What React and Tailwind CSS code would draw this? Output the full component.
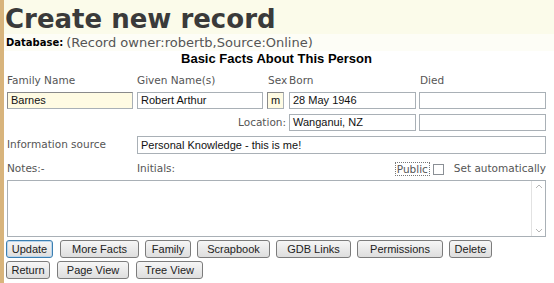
import React from 'react'

const sans = { fontFamily: '"DejaVu Sans", Verdana, sans-serif' }
const arial = { fontFamily: '"Liberation Sans", Arial, sans-serif' }

function Field({ value, className }) {
  return (
    <div
      className={"h-[17px] border border-[#a9b0b6] px-[3px] text-[11px] leading-[15px] text-[#111] whitespace-nowrap overflow-hidden " + className}
      style={arial}
    >
      {value}
    </div>
  )
}

function Btn({ label, w, focus }) {
  return (
    <button
      className={
        "h-[18px] rounded-[3px] border text-[11px] leading-[16px] text-[#222] bg-gradient-to-b from-[#f6f6f6] to-[#dedede] " +
        (focus ? "border-[#3c7fb1] shadow-[inset_0_0_0_1px_#bcd6ec]" : "border-[#7c7c7c]") +
        " " + w
      }
      style={arial}
    >
      {label}
    </button>
  )
}

export default function App() {
  return (
    <div className="w-[554px] h-[283px] flex bg-white overflow-hidden">
      <div className="w-[4px] shrink-0 bg-[#d8b47c]" />
      <div className="flex-1 flex flex-col">
        <div className="bg-[#fbfbea] pt-[4px] pl-[1px]">
          <h1 className="text-[26px] leading-[30px] font-bold text-[#3a3a3a]" style={sans}>
            Create new record
          </h1>
        </div>
        <div className="pl-[2px] h-[17px] flex items-center whitespace-nowrap bg-[#fdfdf6]" style={sans}>
          <span className="text-[10px] font-bold text-black">Database:</span>
          <span className="text-[13px] text-[#555] ml-[3px]">(Record owner:robertb,Source:Online)</span>
        </div>

        <div className="pl-[3px] w-[542px] flex flex-col">
          <div className="h-[16px] flex items-center justify-center text-[13px] font-bold text-black" style={arial}>
            Basic Facts About This Person
          </div>

          {/* labels */}
          <div className="mt-[7px] h-[14px] flex items-center text-[10.5px] text-[#555] whitespace-nowrap" style={sans}>
            <span className="w-[130px]">Family Name</span>
            <span className="w-[131px]">Given Name(s)</span>
            <span className="w-[21px]">Sex</span>
            <span className="w-[131px]">Born</span>
            <span>Died</span>
          </div>

          {/* names / born / died */}
          <div className="mt-[4px] flex">
            <Field value="Barnes" className="w-[126px] bg-[#fffbe3] border-t-[#8a8a8a] border-l-[#8a8a8a]" />
            <Field value="Robert Arthur" className="w-[126px] ml-[4px] bg-white" />
            <Field value="m" className="w-[17px] ml-[4px] px-[2px] bg-[#fffbe3] border-t-[#8a8a8a] border-l-[#8a8a8a]" />
            <Field value="28 May 1946" className="w-[127px] ml-[5px] bg-white" />
            <Field value="" className="w-[127px] ml-[3px] bg-white" />
          </div>

          {/* location */}
          <div className="mt-[5px] flex items-center">
            <span className="w-[282px] pr-[3px] text-right text-[10.5px] text-[#555]" style={sans}>Location:</span>
            <Field value="Wanganui, NZ" className="w-[127px] bg-white" />
            <Field value="" className="w-[127px] ml-[3px] bg-white" />
          </div>

          {/* information source */}
          <div className="mt-[5px] flex items-center">
            <span className="w-[130px] text-[10.5px] text-[#555]" style={sans}>Information source</span>
            <Field value="Personal Knowledge - this is me!" className="flex-1 h-[18px] leading-[16px] bg-white" />
          </div>

          {/* notes / initials / public */}
          <div className="mt-[8px] h-[14px] flex items-center text-[10.5px] text-[#555] whitespace-nowrap" style={sans}>
            <span className="w-[130px]">Notes:-</span>
            <span>Initials:</span>
            <span className="ml-auto border border-dotted border-[#777] px-[1px] leading-[12px]">Public</span>
            <span className="ml-[3px] w-[11px] h-[11px] border border-[#8a8f95] bg-white" />
            <span className="ml-[10px]">Set automatically</span>
          </div>

          {/* notes textarea */}
          <div className="mt-[4px] h-[57px] flex border border-[#a9b0b6] bg-white">
            <div className="flex-1" />
            <div className="w-[14px] border-l border-[#e2e2e2] flex flex-col items-center justify-between py-[3px] text-[#b5b5b5]">
              <svg width="8" height="5" viewBox="0 0 8 5"><path d="M1 4 L4 1 L7 4" fill="none" stroke="currentColor" strokeWidth="1" /></svg>
              <svg width="8" height="5" viewBox="0 0 8 5"><path d="M1 1 L4 4 L7 1" fill="none" stroke="currentColor" strokeWidth="1" /></svg>
            </div>
          </div>
        </div>

        {/* buttons */}
        <div className="pl-[2px] mt-[3px] flex gap-[6px]">
          <Btn label="Update" w="w-[47px]" focus />
          <Btn label="More Facts" w="w-[79px] ml-[1px]" />
          <Btn label="Family" w="w-[46px]" />
          <Btn label="Scrapbook" w="w-[73px]" />
          <Btn label="GDB Links" w="w-[75px]" />
          <Btn label="Permissions" w="w-[86px]" />
          <Btn label="Delete" w="w-[43px]" />
        </div>
        <div className="pl-[2px] mt-[3px] flex gap-[7px]">
          <Btn label="Return" w="w-[44px]" />
          <Btn label="Page View" w="w-[72px]" />
          <Btn label="Tree View" w="w-[67px]" />
        </div>
      </div>
    </div>
  )
}
